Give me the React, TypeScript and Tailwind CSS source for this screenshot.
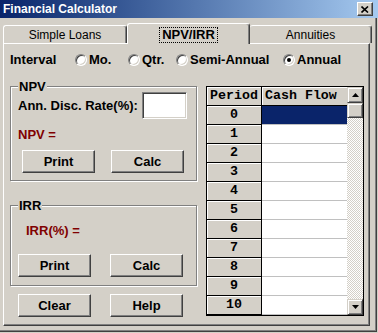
import React from "react";

const raised =
  "bg-[#d4d0c8] border border-t-white border-l-white border-r-[#404040] border-b-[#404040] shadow-[inset_-1px_-1px_#808080]";
const scrollBtn =
  "bg-[#d4d0c8] border border-t-[#d4d0c8] border-l-[#d4d0c8] border-r-[#404040] border-b-[#404040] shadow-[inset_1px_1px_#fff,inset_-1px_-1px_#808080]";

function Btn({ label, className = "" }: { label: string; className?: string }) {
  return (
    <button
      className={`${raised} w-[73px] h-[23px] flex items-center justify-center text-[13px] font-bold text-black ${className}`}
    >
      {label}
    </button>
  );
}

function Radio({ label, checked = false, className = "" }: { label: string; checked?: boolean; className?: string }) {
  return (
    <div className={`flex items-center ${className}`}>
      <span className="w-[12px] h-[12px] rounded-full bg-white border border-t-[#808080] border-l-[#808080] border-b-white border-r-white shadow-[inset_1px_1px_#404040,inset_-1px_-1px_#d4d0c8] flex items-center justify-center">
        {checked && <span className="w-[4px] h-[4px] rounded-full bg-black" />}
      </span>
      <span className="ml-[2px] text-[13px] leading-[14px] font-bold">{label}</span>
    </div>
  );
}

function Group({ title, className = "", children }: { title: string; className?: string; children: React.ReactNode }) {
  return (
    <div className={`relative border border-[#808080] shadow-[inset_1px_1px_#fff,1px_1px_#fff] ${className}`}>
      <span className="absolute left-[7px] top-[-8px] bg-[#d4d0c8] px-[1px] text-[13px] leading-[15px] font-bold">
        {title}
      </span>
      {children}
    </div>
  );
}

function Arrow({ down = false }: { down?: boolean }) {
  return (
    <svg width="7" height="4" viewBox="0 0 7 4" className="block">
      <polygon points={down ? "0,0 7,0 3.5,4" : "0,4 7,4 3.5,0"} fill="#000" />
    </svg>
  );
}

const rows = Array.from({ length: 11 }, (_, i) => i);

export default function App() {
  return (
    <div className="w-[378px] h-[333px] bg-[#d4d0c8] overflow-hidden font-['Liberation_Sans',Arial,sans-serif] text-black select-none">
      {/* title bar */}
      <div className="h-[18px] flex items-center bg-gradient-to-r from-[#0a246a] to-[#a6caf0] pl-[3px] pr-[5px]">
        <span className="text-white text-[12px] font-bold leading-[14px]">Financial Calculator</span>
        <span className={`${raised} ml-auto w-[16px] h-[14px] flex items-center justify-center`}>
          <svg width="8" height="7" viewBox="0 0 8 7">
            <path d="M0.5 0.5 L7 6.5 M7 0.5 L0.5 6.5" stroke="#000" strokeWidth="1.6" />
          </svg>
        </span>
      </div>

      <div className="w-[377px] h-[314px] border-r border-b border-[#404040] shadow-[inset_-1px_-1px_#808080] flex flex-col">
        {/* tabs */}
        <div className="h-[25px] flex items-end pl-[3px]">
          <div className="w-[124px] h-[18px] border-t border-l border-white border-r border-r-[#404040] shadow-[inset_-1px_0_#808080] rounded-t-[3px] flex items-center justify-center text-[12px]">
            Simple Loans
          </div>
          <div className="relative z-10 mb-[-1px] w-[123px] h-[21px] bg-[#d4d0c8] border-t border-l border-white border-r border-r-[#404040] shadow-[inset_-1px_0_#808080] rounded-t-[3px] flex items-start justify-center pt-[3px]">
            <span className="border border-dotted border-black px-[2px] h-[16px] flex items-center text-[13px] font-bold">
              NPV/IRR
            </span>
          </div>
          <div className="w-[122px] h-[18px] border-t border-white border-r border-r-[#404040] shadow-[inset_-1px_0_#808080] rounded-t-[3px] flex items-center justify-center text-[12px]">
            Annuities
          </div>
        </div>

        {/* panel */}
        <div className="ml-[3px] w-[367px] h-[283px] border-t border-l border-white border-r border-b border-r-[#404040] border-b-[#404040] shadow-[inset_-1px_-1px_#808080] flex flex-col">
          <div className="mt-[9px] h-[14px] pl-[6px] flex items-center">
            <span className="w-[65px] text-[13px] leading-[14px] font-bold">Interval</span>
            <Radio label="Mo." className="w-[53px]" />
            <Radio label="Qtr." className="w-[48px]" />
            <Radio label="Semi-Annual" className="w-[107px]" />
            <Radio label="Annual" checked />
          </div>

          <div className="mt-[19px] pl-[6px] flex">
            <div className="w-[187px] flex flex-col">
              <Group title="NPV" className="h-[95px] flex flex-col">
                <div className="pt-[5px] pl-[7px] flex items-center">
                  <span className="w-[124px] text-[13px] leading-[14px] font-bold">Ann. Disc. Rate(%):</span>
                  <span className="w-[45px] h-[27px] bg-white border border-t-[#808080] border-l-[#808080] border-b-white border-r-white shadow-[inset_1px_1px_#404040,inset_-1px_-1px_#d4d0c8]" />
                </div>
                <div className="mt-[9px] pl-[7px] text-[13px] leading-[14px] font-bold text-[#800000]">NPV =</div>
                <div className="mt-[8px] pl-[11px] flex gap-[16px]">
                  <Btn label="Print" />
                  <Btn label="Calc" />
                </div>
              </Group>

              <Group title="IRR" className="mt-[24px] h-[81px] flex flex-col">
                <div className="mt-[18px] pl-[15px] text-[13px] leading-[14px] font-bold text-[#800000]">IRR(%) =</div>
                <div className="mt-[16px] pl-[7px] flex gap-[19px]">
                  <Btn label="Print" />
                  <Btn label="Calc" />
                </div>
              </Group>

              <div className="mt-[8px] pl-[8px] flex gap-[19px]">
                <Btn label="Clear" />
                <Btn label="Help" />
              </div>
            </div>

            {/* grid */}
            <div className="ml-[9px] w-[158px] h-[230px] border border-black flex bg-white font-['Liberation_Mono','Courier_New',monospace] text-[13.3px] font-bold">
              <div className="w-[140px] flex flex-col">
                <div className="h-[19px] flex">
                  <div className="w-[55px] border-r border-b border-black bg-[#d4d0c8] shadow-[inset_1px_1px_#fff] flex items-center justify-center">
                    Period
                  </div>
                  <div className="flex-1 border-b border-black bg-[#d4d0c8] shadow-[inset_1px_1px_#fff] flex items-center pl-[3px]">
                    Cash Flow
                  </div>
                </div>
                {rows.map((r) => (
                  <div key={r} className="h-[19px] flex">
                    <div className="w-[55px] border-r border-b border-black bg-[#d4d0c8] shadow-[inset_1px_1px_#fff] flex items-center justify-center">
                      {r}
                    </div>
                    <div
                      className={`flex-1 border-b border-[#c0c0c0] ${r === 0 ? "bg-[#0a246a]" : "bg-white"}`}
                    />
                  </div>
                ))}
              </div>
              <div className="w-[16px] flex flex-col">
                <div className={`${scrollBtn} h-[16px] flex items-center justify-center`}>
                  <Arrow />
                </div>
                <div className={`${scrollBtn} h-[15px]`} />
                <div className="flex-1 bg-[repeating-conic-gradient(#d4d0c8_0%_25%,#ffffff_0%_50%)] bg-[length:2px_2px]" />
                <div className={`${scrollBtn} h-[16px] flex items-center justify-center`}>
                  <Arrow down />
                </div>
              </div>
            </div>
          </div>
        </div>
      </div>
    </div>
  );
}
